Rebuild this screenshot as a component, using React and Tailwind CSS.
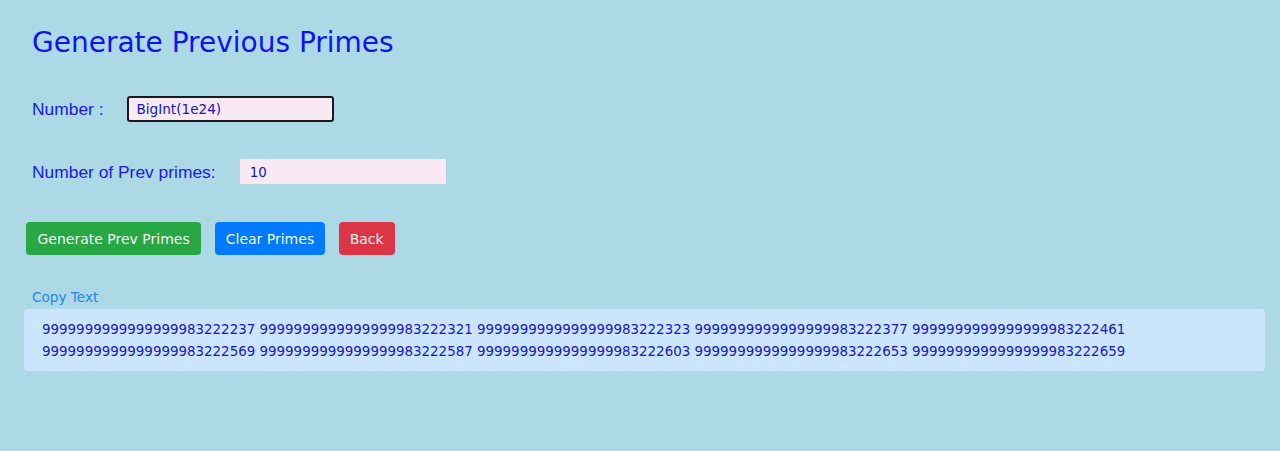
import React from "react";

const primes = [
  "9999999999999999983222237",
  "9999999999999999983222321",
  "9999999999999999983222323",
  "9999999999999999983222377",
  "9999999999999999983222461",
  "9999999999999999983222569",
  "9999999999999999983222587",
  "9999999999999999983222603",
  "9999999999999999983222653",
  "9999999999999999983222659",
];

export default function App() {
  return (
    <div className="w-full min-h-[451px] bg-[#add8e6] pb-[40px]" style={{ fontFamily: '"DejaVu Sans", Verdana, sans-serif' }}>
      <h1 className="pl-[32px] pt-[26px] text-[28px] leading-[34px] text-[#0d14ee] font-normal" style={{ fontFamily: '"DejaVu Sans", Verdana, sans-serif' }}>
        Generate Previous Primes
      </h1>

      <div className="flex items-center pl-[32px] mt-[36px] h-[26px]">
        <label className="text-[17.4px] text-[#1a1ae6] mr-[23px] pt-[1px]" style={{ fontFamily: '"Liberation Sans", Arial, sans-serif' }}>
          Number :
        </label>
        <input
          readOnly
          value="BigInt(1e24)"
          className="w-[207px] h-[26px] bg-[#f8e9f3] border-2 border-[#1a1a1a] rounded-[3px] pl-[8px] text-[13.6px] text-[#1515c8] outline-none"
          style={{ fontFamily: '"DejaVu Sans", Verdana, sans-serif' }}
        />
      </div>

      <div className="flex items-center pl-[32px] mt-[37px] h-[25px]">
        <label className="text-[17.4px] text-[#1a1ae6] mr-[24px] pt-[1px]" style={{ fontFamily: '"Liberation Sans", Arial, sans-serif' }}>
          Number of Prev primes:
        </label>
        <input
          readOnly
          value="10"
          className="w-[206px] h-[25px] bg-[#f8e9f3] pl-[10px] pt-[1px] text-[13.4px] text-[#1515c8] outline-none"
          style={{ fontFamily: '"DejaVu Sans", Verdana, sans-serif' }}
        />
      </div>

      <div className="flex items-center gap-[13.5px] pl-[26px] mt-[38px]">
        <button className="bg-[#28a745] text-[#f4f8f4] text-[14px] leading-[19px] pt-[8px] pb-[6px] px-[11.5px] rounded-[4px]">
          Generate Prev Primes
        </button>
        <button className="bg-[#007bff] text-[#f4f8fc] text-[14px] leading-[19px] pt-[8px] pb-[6px] px-[11px] rounded-[4px]">
          Clear Primes
        </button>
        <button className="bg-[#dc3545] text-[#fcf4f4] text-[14px] leading-[19px] pt-[8px] pb-[6px] px-[11px] rounded-[4px]">
          Back
        </button>
      </div>

      <div className="pl-[32px] mt-[33px] text-[13.6px] leading-[18px] text-[#1e86f0]">Copy Text</div>

      <div className="ml-[24px] mr-[15px] mt-[3px] bg-[#cce5ff] rounded-[4px] px-[18px] pt-[10px] pb-[8px] text-[13.42px] leading-[22px] text-[#1818c0]">
        {primes.join(" ")}
      </div>
    </div>
  );
}
